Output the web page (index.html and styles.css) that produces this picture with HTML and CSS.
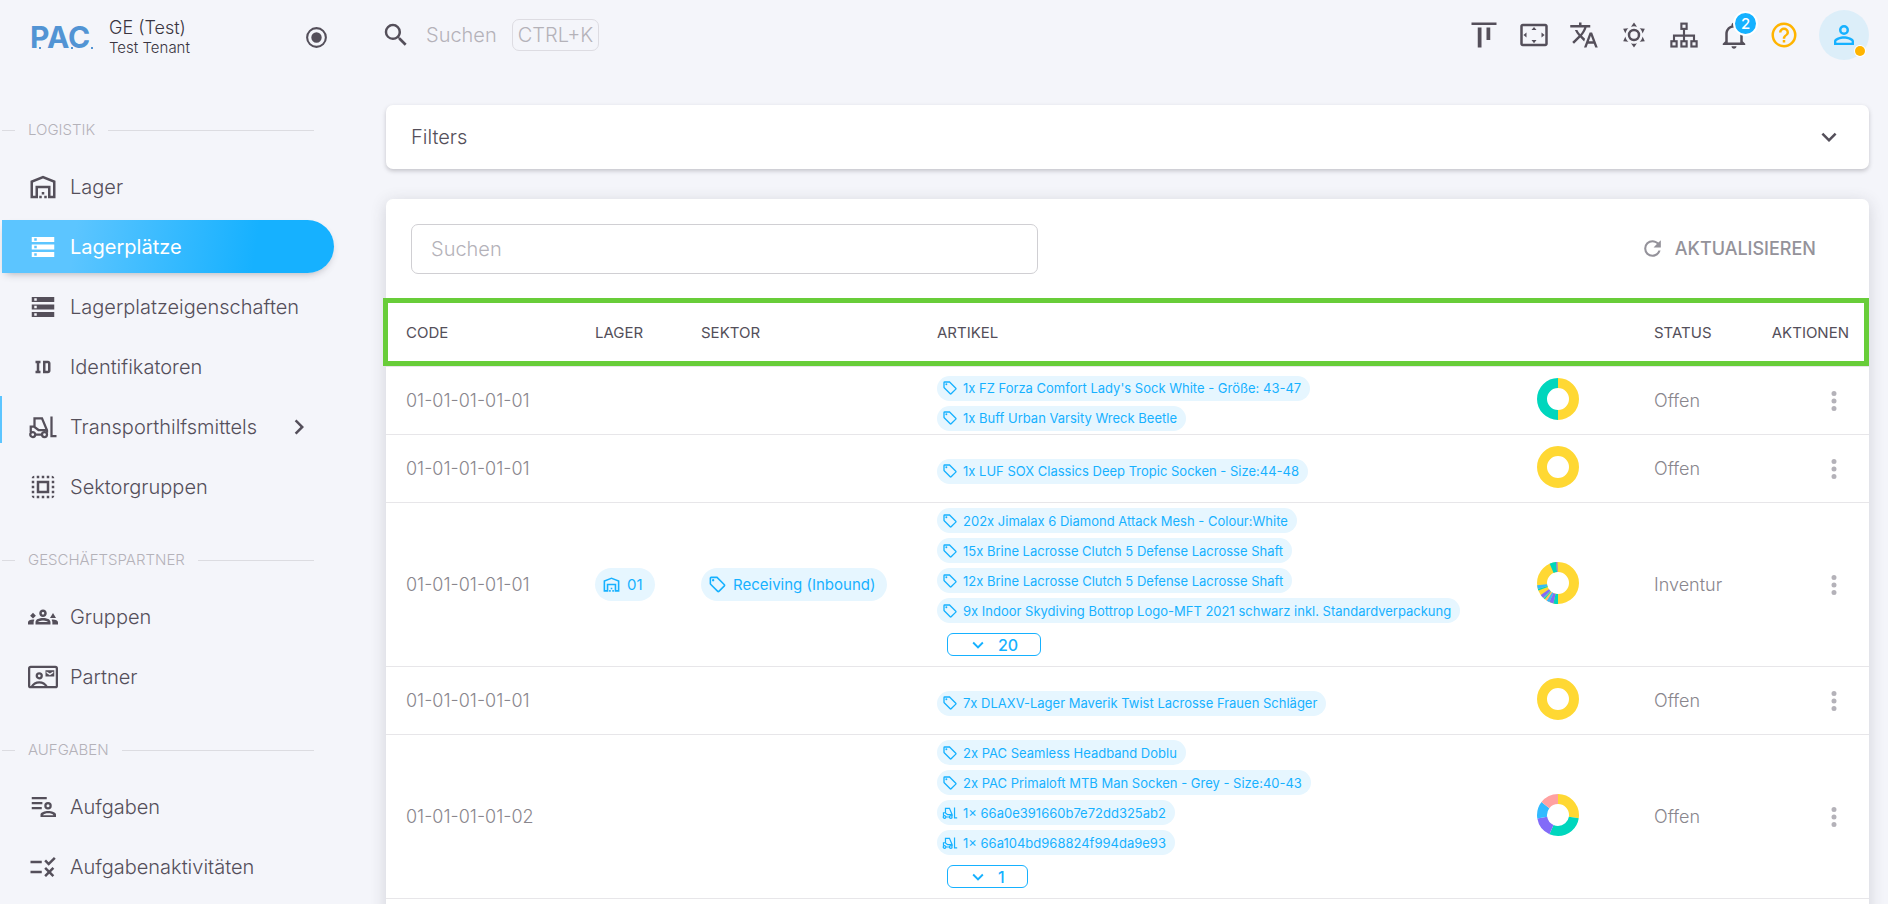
FILE: index.html
```html
<!DOCTYPE html>
<html lang="de">
<head>
<meta charset="utf-8">
<title>Lagerplätze</title>
<link rel="stylesheet" href="styles.css">
</head>
<body>
<svg class="sprite" aria-hidden="true">
  <symbol id="i-warehouse" viewBox="0 0 24 24"><path d="M20 8.35V19h-2v-8H6v8H4V8.35l8-3.2 8 3.2zM22 21V7L12 3 2 7v14h6v-8h8v8h6zM11 19H9v2h2v-2zM13 16h-2v2h2v-2zM15 19h-2v2h2v-2z"/></symbol>
  <symbol id="i-storage" viewBox="0 0 24 24"><path fill-rule="evenodd" d="M3 20v-4h18v4zm2-1h2v-2H5zM3 8V4h18v4zm2-1h2V5H5zm-2 7v-4h18v4zm2-1h2v-2H5z"/></symbol>
  <symbol id="i-id" viewBox="0 0 24 24"><path d="M10 7V9H9V15H10V17H6V15H7V9H6V7H10M16 7C17.11 7 18 7.9 18 9V15C18 16.11 17.11 17 16 17H12V7M16 9H14V15H16V9Z"/></symbol>
  <symbol id="i-forklift" viewBox="0 0 24 24"><g fill="none" stroke="currentColor" stroke-width="1.8"><circle cx="3.8" cy="18" r="2"/><circle cx="13.2" cy="18" r="2"/><path d="M6 18h5M2.2 16v-4.4h2.6l3.6 2.8h6.5M5.2 11.5V5h6l4 9.600v2M18.800 3.600V19.300h4"/></g></symbol>
  <symbol id="i-select" viewBox="0 0 24 24"><path d="M3 5h2V3c-1.100 0-2 .9-2 2zm0 8h2v-2H3v2zm4 8h2v-2H7v2zM3 9h2V7H3v2zm10-6h-2v2h2V3zm6 0v2h2c0-1.100-.9-2-2-2zM5 21v-2H3c0 1.100.9 2 2 2zm-2-4h2v-2H3v2zM9 3H7v2h2V3zm2 18h2v-2h-2v2zm8-8h2v-2h-2v2zm0 8c1.100 0 2-.9 2-2h-2v2zm0-12h2V7h-2v2zm0 8h2v-2h-2v2zm-4 4h2v-2h-2v2zm0-16h2V3h-2v2zM7 17h10V7H7v10zm2-8h6v6H9V9z"/></symbol>
  <symbol id="i-groups" viewBox="0 0 24 24"><path d="M4 8.500 1.700 10.900 4 13.200l2.300-2.300zM20 8.800l-2.400 4h4.800zM5.130 14.100C4.760 14.040 4.390 14 4 14c-.99 0-1.930.21-2.780.58C.48 14.900 0 15.620 0 16.430V18h4.500v-1.610c0-.83.23-1.610.63-2.290zM24 16.430c0-.81-.48-1.530-1.220-1.850C21.930 14.210 20.990 14 20 14c-.39 0-.76.04-1.130.1.4.68.63 1.460.63 2.290V18H24zM16.240 13.650c-1.170-.52-2.610-.9-4.240-.9s-3.070.39-4.240.9C6.680 14.130 6 15.210 6 16.390V18h12v-1.610c0-1.180-.68-2.260-1.760-2.740zM8.070 16c.09-.23.13-.39.91-.69.97-.38 1.990-.56 3.020-.56s2.050.18 3.020.56c.77.3.81.46.91.69zM12 8c.55 0 1 .45 1 1s-.45 1-1 1-1-.45-1-1 .45-1 1-1m0-2c-1.660 0-3 1.340-3 3s1.340 3 3 3 3-1.340 3-3-1.340-3-3-3z"/></symbol>
  <symbol id="i-contact" viewBox="0 0 24 24"><g fill="none" stroke="currentColor" stroke-width="1.800"><rect x=".9" y="3.900" width="22.200" height="16.200" rx="1.200"/><circle cx="9" cy="11" r="2"/><path d="M2.800 20c1.500-2.600 3.600-3.800 6.200-3.800s4.700 1.200 6.200 3.800"/></g><path fill-rule="evenodd" d="M14 6.500h7v5h-7zm.8 1v1.300l2.700 1.700 2.700-1.700V7.500l-2.700 1.700z"/></symbol>
  <symbol id="i-tasks" viewBox="0 0 24 24"><path d="M3 4h12v1.800H3zM3 8h8.500v1.800H3zM3 12h8v1.800H3z"/><path fill-rule="evenodd" d="M16 8a3 3 0 1 1 0 6 3 3 0 0 1 0-6zm0 1.800a1.200 1.200 0 1 0 0 2.400 1.200 1.200 0 0 0 0-2.400zM10 20v-2c0-1.700 3.500-2.800 6.200-2.800s6.200 1.100 6.200 2.800v2zm2-1.500h8.400c-.6-1-2.400-1.500-4.200-1.500s-3.600.5-4.200 1.500z"/></symbol>
  <symbol id="i-rule" viewBox="0 0 24 24"><path d="M16.540 11 13 7.460l1.410-1.410 2.120 2.120 4.240-4.240 1.410 1.410zM11 7H2v2h9zm10 6.410L19.590 12 17 14.590 14.410 12 13 13.410 15.590 16 13 18.590 14.410 20 17 17.410 19.590 20 21 18.590 18.410 16zM11 15H2v2h9z"/></symbol>
  <symbol id="i-right" viewBox="0 0 24 24"><path d="M8.590,16.580L13.170,12L8.590,7.410L10,6L16,12L10,18L8.590,16.580Z"/></symbol>
  <symbol id="i-down" viewBox="0 0 24 24"><path d="M7.410,8.580L12,13.170L16.590,8.580L18,10L12,16L6,10L7.410,8.580Z"/></symbol>
  <symbol id="i-radio" viewBox="0 0 24 24"><path d="M12,20A8,8 0 0,1 4,12A8,8 0 0,1 12,4A8,8 0 0,1 20,12A8,8 0 0,1 12,20M12,2A10,10 0 0,0 2,12A10,10 0 0,0 12,22A10,10 0 0,0 22,12A10,10 0 0,0 12,2M12,7A5,5 0 0,0 7,12A5,5 0 0,0 12,17A5,5 0 0,0 17,12A5,5 0 0,0 12,7Z"/></symbol>
  <symbol id="i-search" viewBox="0 0 24 24"><path d="M9.500,3A6.500,6.500 0 0,1 16,9.500C16,11.110 15.410,12.590 14.440,13.730L14.710,14H15.500L20.500,19L19,20.500L14,15.500V14.710L13.730,14.440C12.590,15.410 11.110,16 9.500,16A6.500,6.500 0 0,1 3,9.500A6.500,6.500 0 0,1 9.500,3M9.500,5C7,5 5,7 5,9.500C5,12 7,14 9.500,14C12,14 14,12 14,9.500C14,7 12,5 9.500,5Z"/></symbol>
  <symbol id="i-align" viewBox="0 0 24 24"><path d="M22 2v2H2V2zM7 22h3V6H7zm7-6h3V6h-3z"/></symbol>
  <symbol id="i-overscan" viewBox="0 0 24 24"><path d="M12.010 5.500 10 8h4zM18 10v4l2.500-1.990zM6 10l-2.500 2.010L6 14zm8 6h-4l2.010 2.500zm7-13H3c-1.100 0-2 .9-2 2v14c0 1.100.9 2 2 2h18c1.100 0 2-.9 2-2V5c0-1.100-.9-2-2-2zm0 16.010H3V4.990h18z"/></symbol>
  <symbol id="i-translate" viewBox="0 0 24 24"><path d="M12.870 15.070l-2.540-2.510.03-.03c1.740-1.940 2.980-4.170 3.710-6.530H17V4h-7V2H8v2H1v1.990h11.170C11.500 7.920 10.440 9.750 9 11.350 8.070 10.320 7.300 9.190 6.690 8h-2c.73 1.630 1.730 3.170 2.980 4.560l-5.090 5.020L4 19l5-5 3.110 3.110zM18.500 10h-2L12 22h2l1.120-3h4.750L21 22h2zm-2.620 7l1.620-4.330L19.120 17z"/></symbol>
  <symbol id="i-sun" viewBox="0 0 24 24"><path d="M12,7A5,5 0 0,1 17,12A5,5 0 0,1 12,17A5,5 0 0,1 7,12A5,5 0 0,1 12,7M12,9A3,3 0 0,0 9,12A3,3 0 0,0 12,15A3,3 0 0,0 15,12A3,3 0 0,0 12,9M12,2L14.390,5.420C13.650,5.150 12.840,5 12,5C11.160,5 10.350,5.150 9.610,5.420L12,2M3.340,7L7.500,6.650C6.900,7.160 6.360,7.780 5.940,8.500C5.500,9.240 5.250,10 5.110,10.790L3.340,7M3.360,17L5.120,13.230C5.260,14 5.530,14.780 5.950,15.500C6.370,16.240 6.910,16.860 7.500,17.370L3.360,17M20.650,7L18.880,10.790C18.740,10 18.470,9.230 18.050,8.500C17.630,7.780 17.100,7.150 16.500,6.640L20.650,7M20.640,17L16.500,17.360C17.090,16.850 17.620,16.220 18.040,15.500C18.460,14.770 18.730,14 18.870,13.210L20.640,17M12,22L9.590,18.560C10.330,18.830 11.140,19 12,19C12.820,19 13.630,18.830 14.370,18.560L12,22Z"/></symbol>
  <symbol id="i-sitemap" viewBox="0 0 24 24"><g fill="none" stroke="currentColor" stroke-width="1.700"><rect x="9.900" y="2.900" width="4.200" height="4.200"/><rect x="1.900" y="17" width="4.200" height="4.200"/><rect x="9.900" y="17" width="4.200" height="4.200"/><rect x="17.900" y="17" width="4.200" height="4.200"/><path d="M12 7v10M4 17v-4.500h16V17"/></g></symbol>
  <symbol id="i-bell" viewBox="0 0 24 24"><path d="M10 21H14C14 22.100 13.100 23 12 23S10 22.100 10 21M21 19V20H3V19L5 17V11C5 7.900 7 5.200 10 4.300V4C10 2.900 10.900 2 12 2S14 2.900 14 4V4.300C17 5.200 19 7.900 19 11V17L21 19M17 11C17 8.200 14.800 6 12 6S7 8.200 7 11V18H17V11Z"/></symbol>
  <symbol id="i-help" viewBox="0 0 24 24"><path d="M11,18H13V16H11V18M12,2A10,10 0 0,0 2,12A10,10 0 0,0 12,22A10,10 0 0,0 22,12A10,10 0 0,0 12,2M12,20C7.590,20 4,16.410 4,12C4,7.590 7.590,4 12,4C16.410,4 20,7.590 20,12C20,16.410 16.410,20 12,20M12,6A4,4 0 0,0 8,10H10A2,2 0 0,1 12,8A2,2 0 0,1 14,10C14,12 11,11.750 11,15H13C13,12.750 16,12.500 16,10A4,4 0 0,0 12,6Z"/></symbol>
  <symbol id="i-user" viewBox="0 0 24 24"><path d="M12,4A4,4 0 0,1 16,8A4,4 0 0,1 12,12A4,4 0 0,1 8,8A4,4 0 0,1 12,4M12,6A2,2 0 0,0 10,8A2,2 0 0,0 12,10A2,2 0 0,0 14,8A2,2 0 0,0 12,6M12,13C14.670,13 20,14.330 20,17V20H4V17C4,14.330 9.330,13 12,13M12,14.900C9.030,14.900 5.900,16.360 5.900,17V18.100H18.100V17C18.100,16.360 14.970,14.900 12,14.900Z"/></symbol>
  <symbol id="i-refresh" viewBox="0 0 24 24"><path d="M17.650,6.350C16.200,4.900 14.210,4 12,4A8,8 0 0,0 4,12A8,8 0 0,0 12,20C15.730,20 18.840,17.450 19.730,14H17.650C16.830,16.330 14.610,18 12,18A6,6 0 0,1 6,12A6,6 0 0,1 12,6C13.660,6 15.140,6.690 16.220,7.780L13,11H20V4L17.650,6.350Z"/></symbol>
  <symbol id="i-dots" viewBox="0 0 24 24"><path d="M12,16A2,2 0 0,1 14,18A2,2 0 0,1 12,20A2,2 0 0,1 10,18A2,2 0 0,1 12,16M12,10A2,2 0 0,1 14,12A2,2 0 0,1 12,14A2,2 0 0,1 10,12A2,2 0 0,1 12,10M12,4A2,2 0 0,1 14,6A2,2 0 0,1 12,8A2,2 0 0,1 10,6A2,2 0 0,1 12,4Z"/></symbol>
  <symbol id="i-tag" viewBox="0 0 24 24"><path d="M21.410 11.580l-9-9C12.040 2.210 11.530 2 11 2H4a2 2 0 0 0-2 2v7c0 .53.21 1.040.59 1.410l9 9c.37.38.88.59 1.410.59s1.040-.21 1.410-.59l7-7c.38-.37.59-.88.59-1.410s-.21-1.040-.59-1.420M13 20l-9-9V4h7l9 9M6.500 5A1.500 1.500 0 1 1 5 6.500 1.500 1.500 0 0 1 6.500 5Z"/></symbol>
</svg>

<div class="app">
  <aside class="sidebar">
    <div class="brand">
      <a class="logo" href="#">PAC<svg class="logo-dots" viewBox="0 0 64 4" aria-hidden="true"><path d="M9 1h2v2H9zM41 1h2v2h-2zM61 1h2v2h-2z"/></svg></a>
      <div class="tenant"><span class="tenant-name">GE (Test)</span><span class="tenant-sub">Test Tenant</span></div>
      <button class="pin" type="button" aria-label="Menü anheften"><svg class="icon-md"><use href="#i-radio"/></svg></button>
    </div>
    <nav>
      <h2 class="group"><span>LOGISTIK</span></h2>
      <a class="item" href="#"><svg class="icon"><use href="#i-warehouse"/></svg>Lager</a>
      <a class="item active" href="#"><svg class="icon"><use href="#i-storage"/></svg>Lagerplätze</a>
      <a class="item" href="#"><svg class="icon"><use href="#i-storage"/></svg>Lagerplatzeigenschaften</a>
      <a class="item" href="#"><svg class="icon"><use href="#i-id"/></svg>Identifikatoren</a>
      <a class="item marked" href="#"><svg class="icon"><use href="#i-forklift"/></svg>Transporthilfsmittels<svg class="icon more"><use href="#i-right"/></svg></a>
      <a class="item" href="#"><svg class="icon"><use href="#i-select"/></svg>Sektorgruppen</a>
      <h2 class="group"><span>GESCHÄFTSPARTNER</span></h2>
      <a class="item" href="#"><svg class="icon"><use href="#i-groups"/></svg>Gruppen</a>
      <a class="item" href="#"><svg class="icon"><use href="#i-contact"/></svg>Partner</a>
      <h2 class="group"><span>AUFGABEN</span></h2>
      <a class="item" href="#"><svg class="icon"><use href="#i-tasks"/></svg>Aufgaben</a>
      <a class="item" href="#"><svg class="icon"><use href="#i-rule"/></svg>Aufgabenaktivitäten</a>
    </nav>
  </aside>

  <main class="main">
    <header class="topbar">
      <button class="search" type="button"><svg class="icon"><use href="#i-search"/></svg><span class="search-text">Suchen</span><kbd>CTRL+K</kbd></button>
      <div class="tools">
        <button class="tool" type="button" aria-label="Ausrichtung"><svg class="icon"><use href="#i-align"/></svg></button>
        <button class="tool" type="button" aria-label="Vollbild"><svg class="icon"><use href="#i-overscan"/></svg></button>
        <button class="tool" type="button" aria-label="Sprache"><svg class="icon"><use href="#i-translate"/></svg></button>
        <button class="tool" type="button" aria-label="Design"><svg class="icon"><use href="#i-sun"/></svg></button>
        <button class="tool" type="button" aria-label="Struktur"><svg class="icon"><use href="#i-sitemap"/></svg></button>
        <button class="tool" type="button" aria-label="Benachrichtigungen"><svg class="icon"><use href="#i-bell"/></svg><span class="badge">2</span></button>
        <button class="tool help" type="button" aria-label="Hilfe"><svg class="icon"><use href="#i-help"/></svg></button>
        <button class="avatar" type="button" aria-label="Konto"><svg class="icon"><use href="#i-user"/></svg><span class="presence"></span></button>
      </div>
    </header>

    <button class="card filters" type="button">Filters<svg class="icon"><use href="#i-down"/></svg></button>

    <section class="card list">
      <div class="toolbar">
        <input class="field" type="search" placeholder="Suchen" aria-label="Suchen">
        <button class="refresh" type="button"><svg class="icon-md"><use href="#i-refresh"/></svg>AKTUALISIEREN</button>
      </div>
      <div class="table-wrap">
      <div class="highlight"></div>
      <table>
        <colgroup><col class="c-code"><col class="c-lager"><col class="c-sektor"><col><col class="c-chart"><col class="c-status"><col class="c-actions"></colgroup>
        <thead><tr><th>CODE</th><th>LAGER</th><th>SEKTOR</th><th>ARTIKEL</th><th></th><th>STATUS</th><th class="right">AKTIONEN</th></tr></thead>
        <tbody>
          <tr>
            <td>01-01-01-01-01</td><td></td><td></td>
            <td class="articles">
              <a class="tag" href="#"><svg><use href="#i-tag"/></svg>1x FZ Forza Comfort Lady's Sock White - Größe: 43-47</a>
              <a class="tag" href="#"><svg><use href="#i-tag"/></svg>1x Buff Urban Varsity Wreck Beetle</a>
            </td>
            <td class="chart"><svg class="donut" viewBox="0 0 42 42"><circle class="yellow" cx="21" cy="21" r="16" pathLength="100" stroke-dasharray="50 50"/><circle class="teal" cx="21" cy="21" r="16" pathLength="100" stroke-dasharray="50 50" stroke-dashoffset="-50"/></svg></td>
            <td>Offen</td>
            <td class="right"><button class="menu" type="button" aria-label="Aktionen"><svg class="icon"><use href="#i-dots"/></svg></button></td>
          </tr>
          <tr>
            <td>01-01-01-01-01</td><td></td><td></td>
            <td class="articles">
              <a class="tag" href="#"><svg><use href="#i-tag"/></svg>1x LUF SOX Classics Deep Tropic Socken - Size:44-48</a>
            </td>
            <td class="chart"><svg class="donut" viewBox="0 0 42 42"><circle class="yellow" cx="21" cy="21" r="16"/></svg></td>
            <td>Offen</td>
            <td class="right"><button class="menu" type="button" aria-label="Aktionen"><svg class="icon"><use href="#i-dots"/></svg></button></td>
          </tr>
          <tr>
            <td>01-01-01-01-01</td>
            <td><a class="chip" href="#"><svg><use href="#i-warehouse"/></svg>01</a></td>
            <td><a class="chip" href="#"><svg><use href="#i-tag"/></svg>Receiving (Inbound)</a></td>
            <td class="articles">
              <a class="tag" href="#"><svg><use href="#i-tag"/></svg>202x Jimalax 6 Diamond Attack Mesh - Colour:White</a>
              <a class="tag" href="#"><svg><use href="#i-tag"/></svg>15x Brine Lacrosse Clutch 5 Defense Lacrosse Shaft</a>
              <a class="tag" href="#"><svg><use href="#i-tag"/></svg>12x Brine Lacrosse Clutch 5 Defense Lacrosse Shaft</a>
              <a class="tag" href="#"><svg><use href="#i-tag"/></svg>9x Indoor Skydiving Bottrop Logo-MFT 2021 schwarz inkl. Standardverpackung</a>
              <button class="expand" type="button"><svg><use href="#i-down"/></svg>20</button>
            </td>
            <td class="chart"><svg class="donut" viewBox="0 0 42 42">
              <circle class="yellow" cx="21" cy="21" r="16"/>
              <circle class="teal" cx="21" cy="21" r="16" pathLength="100" stroke-dasharray="3.600 96.400" stroke-dashoffset="-50"/>
              <circle class="purple" cx="21" cy="21" r="16" pathLength="100" stroke-dasharray="3.200 96.800" stroke-dashoffset="-53.600"/>
              <circle class="blue" cx="21" cy="21" r="16" pathLength="100" stroke-dasharray="2.200 97.800" stroke-dashoffset="-56.800"/>
              <circle class="salmon" cx="21" cy="21" r="16" pathLength="100" stroke-dasharray=".9 99.100" stroke-dashoffset="-59"/>
              <circle class="teal" cx="21" cy="21" r="16" pathLength="100" stroke-dasharray=".9 99.100" stroke-dashoffset="-60.800"/>
              <circle class="blue" cx="21" cy="21" r="16" pathLength="100" stroke-dasharray=".8 99.200" stroke-dashoffset="-61.700"/>
              <circle class="purple" cx="21" cy="21" r="16" pathLength="100" stroke-dasharray="2.800 97.200" stroke-dashoffset="-62.500"/>
              <circle class="teal" cx="21" cy="21" r="16" pathLength="100" stroke-dasharray="1.200 98.800" stroke-dashoffset="-69.200"/>
              <circle class="blue" cx="21" cy="21" r="16" pathLength="100" stroke-dasharray="2.800 97.200" stroke-dashoffset="-70.400"/>
              <circle class="teal" cx="21" cy="21" r="16" pathLength="100" stroke-dasharray="5 95" stroke-dashoffset="-93.500"/>
              <circle class="purple" cx="21" cy="21" r="16" pathLength="100" stroke-dasharray="1 99" stroke-dashoffset="-98.500"/>
            </svg></td>
            <td>Inventur</td>
            <td class="right"><button class="menu" type="button" aria-label="Aktionen"><svg class="icon"><use href="#i-dots"/></svg></button></td>
          </tr>
          <tr>
            <td>01-01-01-01-01</td><td></td><td></td>
            <td class="articles">
              <a class="tag" href="#"><svg><use href="#i-tag"/></svg>7x DLAXV-Lager Maverik Twist Lacrosse Frauen Schläger</a>
            </td>
            <td class="chart"><svg class="donut" viewBox="0 0 42 42"><circle class="yellow" cx="21" cy="21" r="16"/></svg></td>
            <td>Offen</td>
            <td class="right"><button class="menu" type="button" aria-label="Aktionen"><svg class="icon"><use href="#i-dots"/></svg></button></td>
          </tr>
          <tr>
            <td>01-01-01-01-02</td><td></td><td></td>
            <td class="articles">
              <a class="tag" href="#"><svg><use href="#i-tag"/></svg>2x PAC Seamless Headband Doblu</a>
              <a class="tag" href="#"><svg><use href="#i-tag"/></svg>2x PAC Primaloft MTB Man Socken - Grey - Size:40-43</a>
              <a class="tag" href="#"><svg><use href="#i-forklift"/></svg>1× 66a0e391660b7e72dd325ab2</a>
              <a class="tag" href="#"><svg><use href="#i-forklift"/></svg>1× 66a104bd968824f994da9e93</a>
              <button class="expand" type="button"><svg><use href="#i-down"/></svg>1</button>
            </td>
            <td class="chart"><svg class="donut" viewBox="0 0 42 42">
              <circle class="yellow" cx="21" cy="21" r="16" pathLength="100" stroke-dasharray="27.500 72.500"/>
              <circle class="teal" cx="21" cy="21" r="16" pathLength="100" stroke-dasharray="29.200 70.800" stroke-dashoffset="-27.500"/>
              <circle class="purple" cx="21" cy="21" r="16" pathLength="100" stroke-dasharray="15.500 84.500" stroke-dashoffset="-56.700"/>
              <circle class="blue" cx="21" cy="21" r="16" pathLength="100" stroke-dasharray="13.400 86.600" stroke-dashoffset="-72.200"/>
              <circle class="salmon" cx="21" cy="21" r="16" pathLength="100" stroke-dasharray="14.400 85.600" stroke-dashoffset="-85.600"/>
            </svg></td>
            <td>Offen</td>
            <td class="right"><button class="menu" type="button" aria-label="Aktionen"><svg class="icon"><use href="#i-dots"/></svg></button></td>
          </tr>
        </tbody>
      </table>
      </div>
    </section>
  </main>
</div>
</body>
</html>
```

FILE: styles.css
```css
:root {
  --bg: #f4f5fa;
  --text: #544f5a;
  --muted: #89868d;
  --faint: #b4b2b9;
  --line: #e7e6e9;
  --primary: #16b1ff;
  --primary-soft: #e6f6ff;
}

* { box-sizing: border-box; }

body {
  margin: 0;
  background: #fff;
  color: var(--text);
  font-family: Inter, "Open Sans", sans-serif;
  font-size: 20px;
  font-weight: 300;
}

button {
  margin: 0;
  padding: 0;
  border: 0;
  background: none;
  color: inherit;
  font: inherit;
  cursor: pointer;
}

a { color: inherit; text-decoration: none; }

svg { display: block; flex: none; fill: currentColor; }

.sprite { position: absolute; width: 0; height: 0; }
.icon { width: 30px; height: 30px; }
.icon-md { width: 25px; height: 25px; }

.app {
  display: grid;
  grid-template-columns: 361px minmax(0, 1fr);
  height: calc(100vh - 3px);
  overflow: hidden;
  background: var(--bg);
}

/* Sidebar */
.sidebar { padding-left: 2px; }

.brand {
  display: flex;
  align-items: center;
  height: 83px;
  padding: 0 32px 9px 28px;
}

.logo {
  position: relative;
  width: 64px;
  color: #5294d4;
  font-size: 30px;
  font-weight: 700;
  line-height: 34px;
}

.logo-dots {
  position: absolute;
  left: 0;
  bottom: 4px;
  width: 64px;
  height: 4px;
}

.tenant {
  display: flex;
  flex: 1;
  flex-direction: column;
  padding: 2px 0 0 15px;
  color: #3a3541;
}

.tenant-name { font-size: 18px; line-height: 20px; }
.tenant-sub { font-size: 15px; line-height: 20px; }

.group {
  display: flex;
  align-items: center;
  gap: 13px;
  width: 312px;
  height: 70px;
  margin: 0;
  padding: 37px 0 13px;
  color: var(--faint);
  font-size: 15px;
  font-weight: 300;
  line-height: 20px;
}

.group::before,
.group::after {
  content: "";
  flex: 1;
  height: 1px;
  background: #dcdce1;
}

.group::before { flex: 0 0 13px; }

.item {
  position: relative;
  display: flex;
  align-items: center;
  gap: 12px;
  width: 332px;
  height: 53px;
  margin-top: 7px;
  padding: 0 20px 0 26px;
  border-radius: 0 27px 27px 0;
}

.item.active {
  background: linear-gradient(98deg, #5cc5ff 22%, #16b1ff 76%);
  box-shadow: 0 4px 8px -4px rgba(58, 53, 65, .42);
  color: #fff;
  font-weight: 400;
}

.item.marked::before {
  content: "";
  position: absolute;
  top: -4px;
  left: -2px;
  width: 2px;
  height: 47px;
  background: #5cc5ff;
}

.more { margin-left: auto; }

/* Main area */
.main { padding: 0 19px 0 25px; }

.topbar {
  display: flex;
  align-items: center;
  justify-content: space-between;
  height: 70px;
  margin-bottom: 35px;
}

.search {
  display: flex;
  align-items: center;
  margin-left: -5px;
  color: var(--text);
}

.search-text { margin: 0 15px; color: var(--faint); }

kbd {
  padding: 0 5px;
  border: 1px solid #dddce2;
  border-radius: 7px;
  color: var(--faint);
  font: inherit;
  line-height: 30px;
}

.tools { display: flex; }

.tool,
.avatar {
  position: relative;
  display: grid;
  place-items: center;
  width: 50px;
  height: 50px;
}

.help { color: #ffb400; }

.badge {
  position: absolute;
  top: 1px;
  right: 1px;
  width: 25px;
  height: 25px;
  border: 2px solid #fff;
  border-radius: 50%;
  background: var(--primary);
  color: #fff;
  font-size: 15px;
  font-weight: 500;
  line-height: 21px;
  text-align: center;
}

.avatar {
  margin-left: 10px;
  border-radius: 50%;
  background: #dceef9;
  color: var(--primary);
}

.presence {
  position: absolute;
  right: 4px;
  bottom: 4px;
  width: 10px;
  height: 10px;
  border-radius: 50%;
  background: #ffb400;
  box-shadow: 0 0 0 1px #fff;
}

.card {
  border-radius: 7px;
  background: #fff;
}

.filters {
  display: flex;
  align-items: center;
  justify-content: space-between;
  width: 100%;
  height: 64px;
  margin-bottom: 30px;
  padding: 0 25px;
  box-shadow: 0 2px 4px rgba(58, 53, 65, .26);
}

.list {
  min-height: 100vh;
  box-shadow: 0 3px 16px rgba(58, 53, 65, .18);
}

.toolbar {
  display: flex;
  align-items: center;
  justify-content: space-between;
  height: 99px;
  padding: 0 53px 0 25px;
}

.field {
  width: 46%;
  max-width: 627px;
  height: 50px;
  padding: 0 19px;
  border: 1px solid #d0cfd3;
  border-radius: 7px;
  background: none;
  color: var(--text);
  font: inherit;
}

.field::placeholder { color: var(--faint); opacity: 1; }

.refresh {
  display: flex;
  align-items: center;
  gap: 10px;
  color: #94929a;
  font-size: 18px;
  font-weight: 500;
}

.table-wrap { position: relative; }

.highlight {
  position: absolute;
  top: 0;
  right: 0;
  left: -3px;
  height: 68px;
  border: 5px solid #68cd39;
}

table {
  width: 100%;
  border-collapse: separate;
  border-spacing: 0;
  table-layout: fixed;
}

.c-code { width: 189px; }
.c-lager { width: 106px; }
.c-sektor { width: 236px; }
.c-chart { width: 117px; }
.c-status { width: 118px; }
.c-actions { width: 117px; }

th,
td {
  height: 68px;
  padding: 0 0 0 20px;
  border-bottom: 1px solid var(--line);
  text-align: left;
  vertical-align: middle;
  white-space: nowrap;
}

th { height: 69px; font-size: 15px; font-weight: 400; }
td { color: var(--muted); font-size: 18px; }

th.right { padding: 0 20px 0 0; text-align: right; }
td.right { padding: 0 20px 0 0; }

.menu { display: block; margin-left: auto; color: var(--faint); }

.tag {
  display: flex;
  align-items: center;
  gap: 5px;
  width: fit-content;
  height: 25px;
  margin-top: 5px;
  padding: 0 9px 0 5px;
  border-radius: 13px;
  background: var(--primary-soft);
  color: var(--primary);
  font-size: 13px;
  font-weight: 400;
}

.tag svg { width: 16px; height: 16px; }

.chip {
  display: flex;
  align-items: center;
  gap: 6px;
  width: fit-content;
  height: 33px;
  padding: 0 12px 0 7px;
  border-radius: 17px;
  background: var(--primary-soft);
  color: var(--primary);
  font-size: 15px;
  font-weight: 400;
}

.chip svg { width: 19px; height: 19px; }

.expand {
  display: flex;
  align-items: center;
  gap: 9px;
  height: 23px;
  margin: 10px 0 10px 10px;
  padding: 0 22px 0 19px;
  border: 1px solid var(--primary);
  border-radius: 6px;
  color: var(--primary);
  font-size: 16px;
  font-weight: 500;
}

.expand svg { width: 22px; height: 22px; }

.chart { padding-bottom: 4px; }

.donut {
  width: 42px;
  height: 42px;
  transform: rotate(-90deg);
}

.donut circle { fill: none; stroke-width: 10; }
.donut .yellow { stroke: #ffd833; }
.donut .teal { stroke: #00d6bd; }
.donut .purple { stroke: #826bf8; }
.donut .blue { stroke: #32baff; }
.donut .salmon { stroke: #ffa1a1; }
```
